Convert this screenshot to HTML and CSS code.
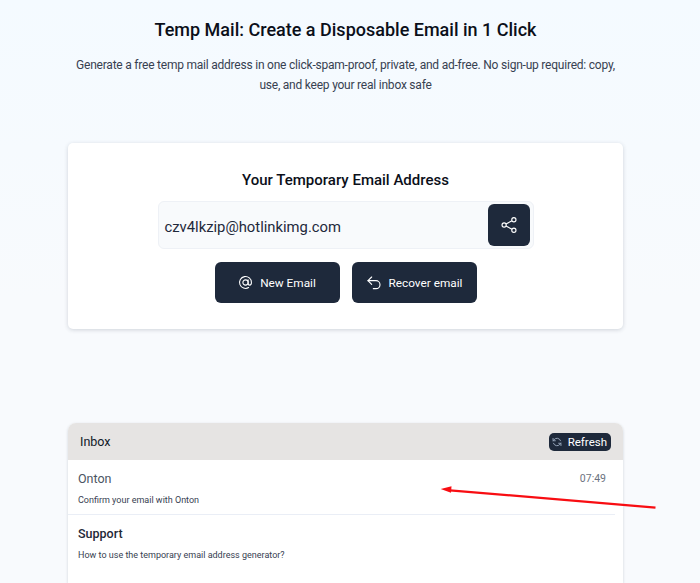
FILE: index.html
```html
<!DOCTYPE html>
<html lang="en">
<head>
    <meta charset="UTF-8">
    <meta name="viewport" content="width=device-width, initial-scale=1.0">
    <title>Temp Mail</title>
    <link rel="stylesheet" href="styles.css">
</head>
<body>
    <div class="page">
        <!-- Intro -->
        <div class="intro">
            <h1>Temp Mail: Create a Disposable Email in 1 Click</h1>
            <p>Generate a free temp mail address in one click-spam-proof, private, and ad-free. No sign-up required: copy, use, and keep your real inbox safe</p>
        </div>

        <!-- Address card -->
        <div class="address-card">
            <h2>Your Temporary Email Address</h2>
            <div class="address-field">
                <span class="address-text">czv4lkzip@hotlinkimg.com</span>
                <button class="share-btn" aria-label="Share">
                    <svg width="18" height="18" viewBox="0 0 24 24" fill="none" stroke="currentColor" stroke-width="1.5">
                        <circle cx="18.5" cy="5" r="2.8"/>
                        <circle cx="5.5" cy="12" r="2.8"/>
                        <circle cx="18.5" cy="19" r="2.8"/>
                        <path d="M8 10.7 16 6.3M8 13.3l8 4.4"/>
                    </svg>
                </button>
            </div>
            <div class="address-actions">
                <button class="action-btn">
                    <svg width="15" height="15" viewBox="0 0 24 24" fill="none" stroke="currentColor" stroke-width="1.7" stroke-linecap="round" stroke-linejoin="round">
                        <circle cx="12" cy="12" r="4.2"/>
                        <path d="M16.2 7.8v5.7c0 1.7 1.1 2.7 2.5 2.7s2.8-1.2 2.8-4.2A9.5 9.5 0 1 0 17 20"/>
                    </svg>
                    New Email
                </button>
                <button class="action-btn">
                    <svg width="16" height="16" viewBox="0 0 24 24" fill="none" stroke="currentColor" stroke-width="1.7" stroke-linecap="round" stroke-linejoin="round">
                        <path d="M8.5 3 3 8.5 8.5 14"/>
                        <path d="M3 8.5h12a6 6 0 0 1 0 12h-4"/>
                    </svg>
                    Recover email
                </button>
            </div>
        </div>

        <!-- Inbox -->
        <div class="inbox">
            <div class="inbox-header">
                <span class="inbox-title">Inbox</span>
                <button class="refresh-btn">
                    <svg width="10" height="10" viewBox="0 0 24 24" fill="none" stroke="currentColor" stroke-width="2.4" stroke-linecap="round" stroke-linejoin="round">
                        <path d="M20.5 9A9 9 0 0 0 5 6.5L2.5 9M3.5 15A9 9 0 0 0 19 17.500l2.500-2.500"/>
                        <path d="M2.500 3.500V9H8M21.500 20.500V15H16"/>
                    </svg>
                    Refresh
                </button>
            </div>
            <div class="mail-row">
                <div class="mail-top">
                    <span class="mail-from">Onton</span>
                    <span class="mail-time">07:49</span>
                </div>
                <div class="mail-subject">Confirm your email with Onton</div>
            </div>
            <div class="mail-row">
                <div class="mail-top">
                    <span class="mail-from mail-from-unread">Support</span>
                </div>
                <div class="mail-subject">How to use the temporary email address generator?</div>
            </div>
        </div>

        <!-- Annotation arrow drawn over the screenshot -->
        <svg class="arrow" width="700" height="583" viewBox="0 0 700 583">
            <path d="M655.500 507.700 450 490.300" fill="none" stroke="#f80d12" stroke-width="2.200"/>
            <path d="M440.700 489 451.500 486.200 451 492.800Z" fill="#f80d12"/>
        </svg>
    </div>
</body>
</html>
```

FILE: styles.css
```css
/* General Styles */
html, body {
    margin: 0;
    padding: 0;
    height: 583px;
    overflow: hidden;
}

body {
    font-family: Roboto, "Noto Sans", sans-serif;
    color: #0f172a;
    background: linear-gradient(180deg, #f4faff 0, #f8fafd 300px);
}

.page {
    position: relative;
    display: flex;
    flex-direction: column;
    height: 583px;
    padding: 0 77px 0 68px;
    box-sizing: border-box;
}

button {
    font-family: inherit;
    border: none;
    cursor: pointer;
}

/* Intro */
.intro {
    padding-top: 16px;
    text-align: center;
}

.intro h1 {
    margin: 0;
    font-size: 18px;
    line-height: 27px;
    font-weight: 500;
    color: #0b0f19;
}

.intro p {
    margin: 12px 0 0;
    font-size: 12px;
    letter-spacing: -0.22px;
    line-height: 20px;
    color: #374151;
}

/* Address card */
.address-card {
    flex: none;
    margin-top: 48px;
    height: 186px;
    padding-top: 27px;
    box-sizing: border-box;
    background: white;
    border-radius: 5px;
    box-shadow: 0 1px 4px rgba(30, 41, 59, 0.18);
    text-align: center;
}

.address-card h2 {
    margin: 0;
    font-size: 15px;
    line-height: 20px;
    font-weight: 500;
    color: #0b0f19;
}

.address-field {
    display: flex;
    align-items: center;
    justify-content: space-between;
    width: 376px;
    height: 48px;
    margin: 11px auto 0;
    padding: 0 3px 0 6px;
    box-sizing: border-box;
    background: #f8fafc;
    border: 1px solid #eef1f6;
    border-radius: 6px;
}

.address-text {
    padding-top: 3px;
    font-size: 14.800px;
    color: #1e293b;
}

.share-btn {
    display: flex;
    align-items: center;
    justify-content: center;
    width: 42px;
    height: 42px;
    background: #1e293b;
    color: white;
    border-radius: 6px;
}

.address-actions {
    display: flex;
    justify-content: center;
    gap: 12px;
    margin-top: 13px;
}

.action-btn {
    display: flex;
    align-items: center;
    justify-content: center;
    gap: 7px;
    width: 125px;
    height: 41px;
    background: #1e293b;
    color: white;
    font-size: 11.800px;
    border-radius: 6px;
}

/* Inbox */
.inbox {
    flex: 1;
    margin-top: 94px;
    background: white;
    border-radius: 8px 8px 0 0;
    box-shadow: 0 1px 3px rgba(30, 41, 59, 0.18);
}

.inbox-header {
    display: flex;
    align-items: center;
    justify-content: space-between;
    height: 37px;
    padding: 0 12px;
    background: #e6e4e3;
    border-radius: 8px 8px 0 0;
}

.inbox-title {
    font-size: 12.500px;
    color: #111827;
}

.refresh-btn {
    display: flex;
    align-items: center;
    gap: 6px;
    height: 18px;
    padding: 0 4px 0 3px;
    background: #1e293b;
    color: white;
    font-size: 11.500px;
    border-radius: 5px;
}

.refresh-btn svg {
    color: #94a3b8;
}

.mail-row {
    height: 55px;
    margin-right: 8px;
    padding: 9px 9px 0 10px;
    box-sizing: border-box;
    border-bottom: 1px solid #eaeef6;
}

.mail-row:last-child {
    border-bottom: none;
}

.mail-top {
    display: flex;
    justify-content: space-between;
    align-items: center;
    height: 18px;
}

.mail-from {
    font-size: 12.500px;
    color: #4b5563;
}

.mail-from-unread {
    font-weight: 500;
    color: #1f2937;
}

.mail-time {
    font-size: 10.500px;
    color: #6b7280;
}

.mail-subject {
    margin-top: 6px;
    font-size: 9px;
    line-height: 14px;
    color: #374151;
}

/* Annotation */
.arrow {
    position: absolute;
    top: 0;
    left: 0;
}
```
